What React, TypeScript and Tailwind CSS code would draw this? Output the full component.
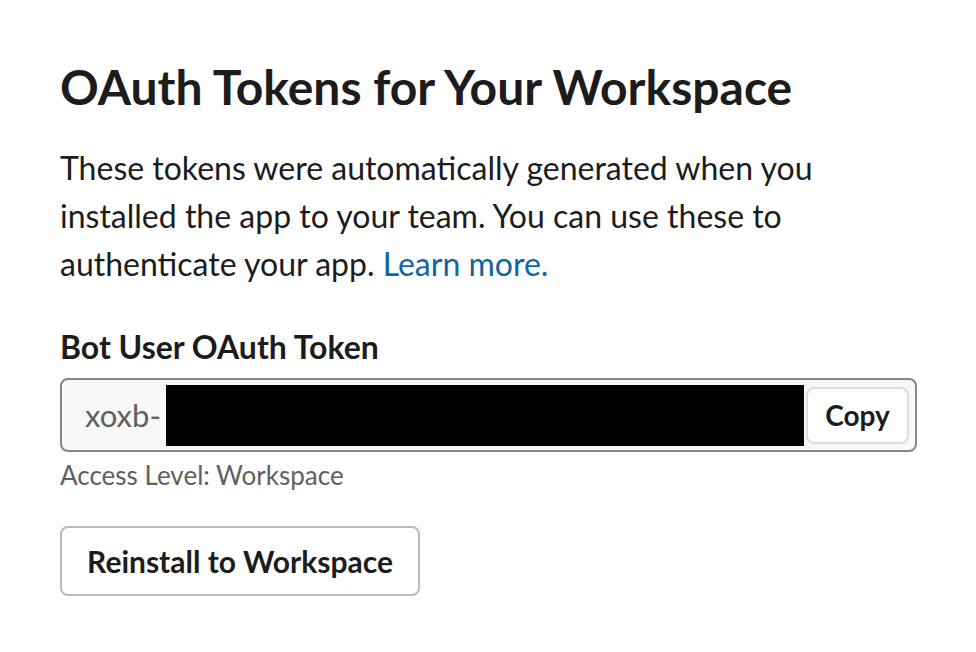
export default function App() {
  return (
    <div className="min-h-screen bg-white font-['Lato','Noto_Sans',sans-serif] text-[#1d1c1d]">
      <div className="px-[60px] pt-[57px]">
        <h2 className="text-[48px] font-bold leading-[60px]">
          OAuth Tokens for Your Workspace
        </h2>
        <p className="mt-[27px] w-[800px] text-[32px] leading-[48px]">
          These tokens were automatically generated when you installed the app to
          your team. You can use these to authenticate your app.{" "}
          <a className="text-[#1264a3]" href="#">
            Learn more.
          </a>
        </p>

        <div className="mt-[39px]">
          <label className="block text-[32px] font-bold leading-[40px]">
            Bot User OAuth Token
          </label>
          <div className="mt-[11px] flex h-[74px] w-[857px] items-center rounded-[8px] border-2 border-[#868686] bg-[#f8f8f8] pl-[23px] pr-[6px]">
            <span className="text-[31px] text-[#616061]">xoxb-</span>
            <div className="ml-[5px] h-[61px] w-[638px] bg-black" />
            <button className="ml-auto flex h-[57px] w-[103px] items-center justify-center rounded-[8px] border-2 border-[#dddddd] bg-white text-[28px] font-bold">
              Copy
            </button>
          </div>
          <div className="mt-[5px] text-[26px] leading-[36px] text-[#616061]">
            Access Level: Workspace
          </div>
        </div>

        <button className="mt-[33px] h-[70px] w-[360px] rounded-[8px] border-2 border-[#bbbbbb] bg-white text-[30px] font-bold">
          Reinstall to Workspace
        </button>
      </div>
    </div>
  );
}
